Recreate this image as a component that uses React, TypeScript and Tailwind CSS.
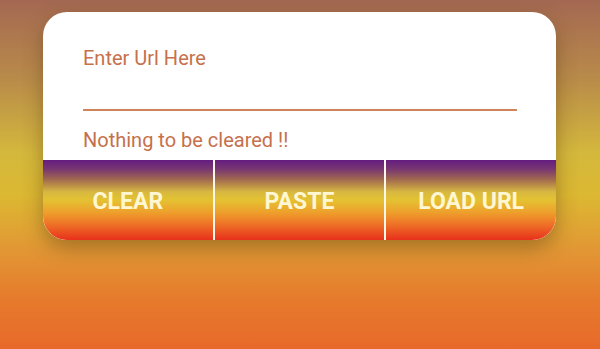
import React from "react";

export default function App() {
  const btn =
    "flex-1 flex items-center justify-center pt-[4px] text-[23px] font-bold text-[#fff6d2] bg-[linear-gradient(to_bottom,#641c80_0%,#7a3870_12%,#a0684e_24%,#d8b840_40%,#e4c232_50%,#ee9e2c_66%,#ee6c26_82%,#e8301c_100%)]";
  return (
    <div
      className="w-[600px] h-[349px] overflow-hidden flex flex-col items-center pt-[12px] bg-[linear-gradient(to_bottom,#a46852_0%,#b88a4a_22%,#d4b83c_44%,#dcb832_56%,#e29634_72%,#e67a2c_86%,#e8692a_100%)]"
      style={{ fontFamily: "Roboto, 'Liberation Sans', sans-serif" }}
    >
      <div className="ml-[-1px] w-[513px] h-[228px] bg-white rounded-[24px] overflow-hidden flex flex-col shadow-[0_8px_20px_rgba(90,60,20,0.45)]">
        <div className="flex-1 flex flex-col px-[40px] pt-[34px]">
          <div className="text-[20px] leading-[24px] text-[#c6704c]">Enter Url Here</div>
          <div className="mt-[39px] h-[2px] w-[434px] bg-[#d0845a]" />
          <div className="mt-[17px] text-[20px] leading-[24px] text-[#c6704c]">Nothing to be cleared !!</div>
        </div>
        <div className="h-[80px] flex gap-[2px] bg-[#fff6ea]">
          <div className={btn}>CLEAR</div>
          <div className={btn}>PASTE</div>
          <div className={btn}>LOAD URL</div>
        </div>
      </div>
    </div>
  );
}
